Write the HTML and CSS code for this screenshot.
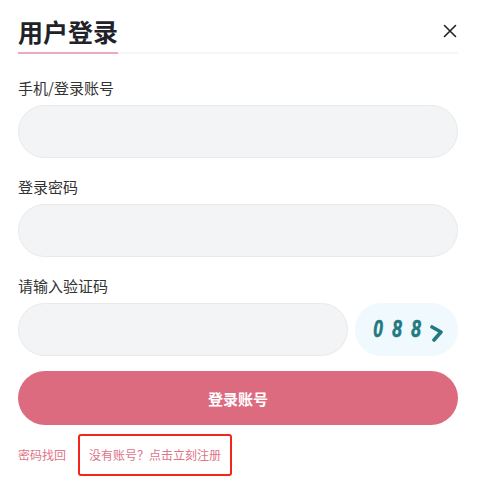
FILE: index.html
```html
<!DOCTYPE html>
<html lang="zh-CN">
<head>
    <meta charset="UTF-8">
    <meta name="viewport" content="width=device-width, initial-scale=1.0">
    <title>用户登录</title>
    <link rel="stylesheet" href="styles.css">
</head>
<body>
    <div class="panel">
        <div class="header">
            <div class="title">用户登录</div>
            <span class="close">
                <svg width="14" height="14" viewBox="0 0 14 14">
                    <path d="M1.5 1.5 L12.5 12.5 M12.5 1.5 L1.5 12.5" stroke="#222" stroke-width="1.6" stroke-linecap="round" fill="none"/>
                </svg>
            </span>
        </div>

        <div class="field">
            <div class="label">手机/登录账号</div>
            <input class="input" type="text">
        </div>

        <div class="field">
            <div class="label">登录密码</div>
            <input class="input" type="password">
        </div>

        <div class="field">
            <div class="label">请输入验证码</div>
            <div class="captcha-row">
                <input class="input" type="text">
                <div class="captcha">
                    <span class="digit">0</span>
                    <span class="digit">8</span>
                    <span class="digit">8</span>
                    <svg class="arrow" width="13" height="22" viewBox="0 0 13 22">
                        <path d="M2 6 L11 11 L4 19" stroke="#207a7f" stroke-width="3.6" stroke-linecap="round" stroke-linejoin="round" fill="none"/>
                    </svg>
                </div>
            </div>
        </div>

        <button class="submit">登录账号</button>

        <div class="links">
            <a class="link">密码找回</a>
            <a class="link register">没有账号？点击立刻注册</a>
        </div>
    </div>
</body>
</html>
```

FILE: styles.css
```css
body {
    margin: 0;
    background-color: #fff;
    color: #333;
    font-family: "Noto Sans CJK SC", "Noto Sans", sans-serif;
}

.panel {
    padding: 0 23px 0 18px;
}

.header {
    display: flex;
    justify-content: space-between;
    align-items: center;
    padding-top: 14px;
    border-bottom: 2px solid #f6f6f6;
}

.title {
    font-size: 25px;
    line-height: 34px;
    font-weight: bold;
    color: #1f2229;
    padding-bottom: 4px;
    border-bottom: 2px solid #e9aab9;
    margin-bottom: -2px;
}

.close {
    display: flex;
    margin-right: 1px;
    margin-top: -4px;
}

.field {
    margin-top: 24px;
}

.field + .field {
    margin-top: 19px;
}

.label {
    font-size: 15px;
    line-height: 20px;
    color: #333;
    margin-bottom: 7px;
}

.input {
    display: block;
    box-sizing: border-box;
    width: 100%;
    height: 53px;
    border: 1px solid #e8e9eb;
    border-radius: 27px;
    background-color: #f3f4f6;
    outline: none;
    padding: 0 20px;
    font-size: 15px;
}

.captcha-row {
    display: flex;
    gap: 7px;
}

.captcha-row .input {
    flex: 1;
}

.captcha {
    box-sizing: border-box;
    flex: none;
    width: 103px;
    height: 53px;
    border-radius: 27px;
    background-color: #f0f9fd;
    display: flex;
    align-items: center;
    justify-content: center;
    gap: 9px;
    padding-left: 2px;
    color: #207a7f;
    font-family: "Liberation Sans", sans-serif;
    font-size: 23px;
    font-weight: bold;
    font-style: italic;
}

.digit {
    display: inline-block;
    width: 10px;
    text-align: center;
    transform: scaleX(0.75);
    -webkit-text-stroke: 0.7px #207a7f;
}

.arrow {
    margin-left: 1px;
    margin-top: 4px;
}

.submit {
    display: block;
    width: 100%;
    height: 54px;
    margin-top: 15px;
    border: none;
    border-radius: 27px;
    background-color: #dd6b80;
    color: #fff;
    font-family: inherit;
    font-size: 15px;
    font-weight: bold;
}

.links {
    display: flex;
    align-items: center;
    gap: 12px;
    margin-top: 9px;
}

.link {
    color: #e0748a;
    font-size: 12px;
    line-height: 16px;
    cursor: pointer;
}

.register {
    border: 2px solid #f4261c;
    border-radius: 3px;
    padding: 11px 9px 11px 9px;
}
```
